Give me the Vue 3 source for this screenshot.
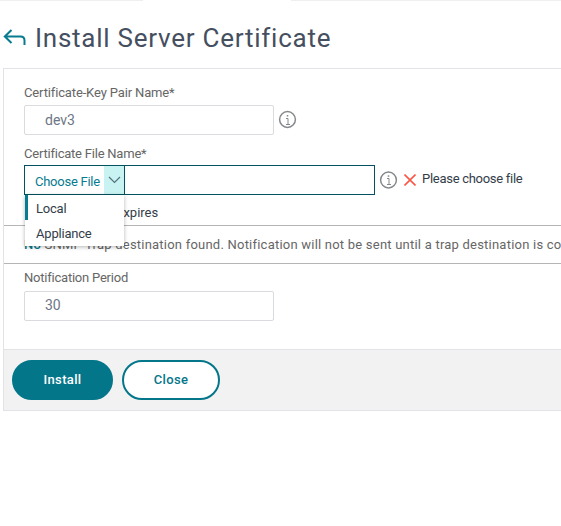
<script setup>
import { ref } from 'vue'

const pairName = ref('dev3')
const period = ref('30')
const sources = ['Local', 'Appliance']
const selected = ref('Local')
</script>

<template>
  <main class="page">
    <div class="tabs"><span class="tab-line first"></span><span class="tab-line second"></span></div>
    <header class="heading">
      <svg class="back" width="24" height="18" viewBox="0 0 24 18" fill="none" stroke="#077b8f" stroke-width="2">
        <path d="M8.5 3 1.8 9.5 8.5 16M2 9.5H17.5Q21.5 9.5 21.5 13.5V18" />
      </svg>
      <h1><span class="t-title">Install Server Certificate</span></h1>
    </header>

    <form class="card" @submit.prevent>
      <label class="label pair-label"><span class="t-pair">Certificate-Key Pair Name*</span></label>
      <div class="row">
        <input v-model="pairName" class="input" />
        <svg class="info" width="18" height="18" viewBox="0 0 18 18" fill="none" stroke="#85888c">
          <circle cx="8.5" cy="8.5" r="7.9" stroke-width="1.5" />
          <path d="M7 7.5H9V13M7 13.5H11" stroke-width="1" />
          <path d="M8.5 4V5.5" stroke-width="1.5" />
        </svg>
      </div>

      <label class="label file-label"><span class="t-file">Certificate File Name*</span></label>
      <div class="row">
        <div class="file-box">
          <button type="button" class="choose"><span class="t-choose">Choose File</span></button>
          <button type="button" class="arrow">
            <svg width="13" height="8" viewBox="0 0 13 8" fill="none" stroke="#53727a" stroke-width="1.2"><path d="M1 1 6.5 6.5 12 1" /></svg>
          </button>
          <div class="file-name"></div>
          <ul class="menu">
            <li v-for="s in sources" :key="s" :class="{ active: s === selected }">{{ s }}</li>
          </ul>
        </div>
        <svg class="info" width="18" height="18" viewBox="0 0 18 18" fill="none" stroke="#85888c">
          <circle cx="8.5" cy="9" r="7.9" stroke-width="1.5" />
          <path d="M7 7.5H9V13M7 13.5H11" stroke-width="1" />
          <path d="M8.5 4.3V5.8" stroke-width="1.5" />
        </svg>
        <svg class="cross" width="12" height="12" viewBox="0 0 12 12" stroke="#fa5746" stroke-width="1.6"><path d="M.5.5 11.5 11.5M11.5.5.5 11.5" /></svg>
        <span class="error"><span class="t-error">Please choose file</span></span>
      </div>

      <div class="expires">Notify When Expires</div>
      <div class="notice"><p><a>No</a> SNMP Trap destination found. Notification will not be sent until a trap destination is configured.</p></div>

      <label class="label period-label"><span class="t-period">Notification Period</span></label>
      <input v-model="period" class="input" />

      <footer class="actions">
        <button type="button" class="btn primary"><span class="t-install">Install</span></button>
        <button type="button" class="btn secondary"><span class="t-close">Close</span></button>
      </footer>
    </form>
  </main>
</template>

<style>
body { background: #fff; overflow: hidden; }
</style>

<style scoped>
* { box-sizing: border-box; }
.page { width: 561px; height: 526px; overflow: hidden; font: 13px/16px Roboto, "Liberation Sans", sans-serif; color: #333d49; }
.tabs { display: flex; justify-content: space-between; height: 1px; }
.tab-line { background: #efefef; }
.first { width: 143px; }
.second { width: 270px; }
.heading { display: flex; height: 67px; padding-left: 3px; }
.back { margin-top: 26px; flex: none; }
h1 { margin: 19px 0 0 8px; font-size: 26px; line-height: 36px; font-weight: 400; color: #454f60; white-space: nowrap; }
.t-title { letter-spacing: .75px; }
.t-pair { letter-spacing: -.14px; }
.t-file { letter-spacing: -.22px; }
.t-choose { letter-spacing: -.25px; }
.t-error { letter-spacing: -.28px; }
.t-period { letter-spacing: -.22px; }
.t-install { letter-spacing: .35px; }
.t-close { letter-spacing: .3px; }
.card { display: flex; flex-direction: column; width: 600px; height: 343px; margin-left: 3px; border: 1px solid #e1e3e6; }
.label { height: 16px; margin-left: 20px; color: #666; white-space: nowrap; }
.pair-label { margin-top: 16px; }
.row { display: flex; align-items: center; margin-left: 20px; }
.input { width: 250px; height: 30px; padding: 0 20px; border: 1px solid #d9dbde; border-radius: 2px; font: 14px Roboto, sans-serif; color: #6d7684; background: #fff; outline: none; }
.pair-label + .row { margin-top: 4px; }
.info { margin-left: 5px; flex: none; overflow: visible; }
.file-label { margin-top: 11px; }
.file-label + .row { margin-top: 3px; }
.file-box { position: relative; display: flex; width: 351px; height: 30px; border: 1px solid #02525f; }
.choose { width: 79px; padding: 2px 0 0 10px; border: 0; background: #fff; color: #077b8f; font: 13px Roboto, sans-serif; text-align: left; white-space: nowrap; }
.arrow { display: grid; place-items: center; width: 21px; padding: 0; border: 0; border-right: 1px solid #02525f; background: #c9f3f2; }
.file-name { flex: 1; }
.menu { position: absolute; top: 29px; left: 0; z-index: 2; width: 99px; height: 51px; margin: 0; padding: 0; list-style: none; background: #fff; box-shadow: 0 1px 4px rgba(0, 0, 0, .3); color: #333d49; letter-spacing: -.2px; }
.menu li { height: 25px; padding-left: 11px; line-height: 28px; }
.menu .active { padding-left: 8px; border-left: 3px solid #077b8f; line-height: 27px; }
.cross { margin-left: 6px; flex: none; }
.error { margin: -3px 0 0 6px; white-space: nowrap; }
.expires { height: 30px; padding: 10px 0 0 38px; white-space: nowrap; }
.notice { height: 39px; padding: 11px 0 0 20px; border: solid #b5b5b5; border-width: 1px 0; color: #666; white-space: nowrap; }
.notice p { margin: 0; letter-spacing: .22px; }
.notice a { color: #077b8f; font-weight: 500; }
.period-label { margin-top: 6px; }
.period-label + .input { margin: 5px 0 0 20px; padding-bottom: 2px; }
.actions { display: flex; gap: 9px; height: 61px; margin-top: auto; padding: 10px 8px; border-top: 1px solid #e1e3e6; background: #f2f2f2; }
.btn { height: 40px; padding: 0 0 2px; border: 2px solid #04768a; border-radius: 20px; font: 500 13px Roboto, sans-serif; }
.primary { width: 101px; background: #04768a; color: #fff; }
.secondary { width: 98px; background: #fff; color: #04768a; }
</style>
